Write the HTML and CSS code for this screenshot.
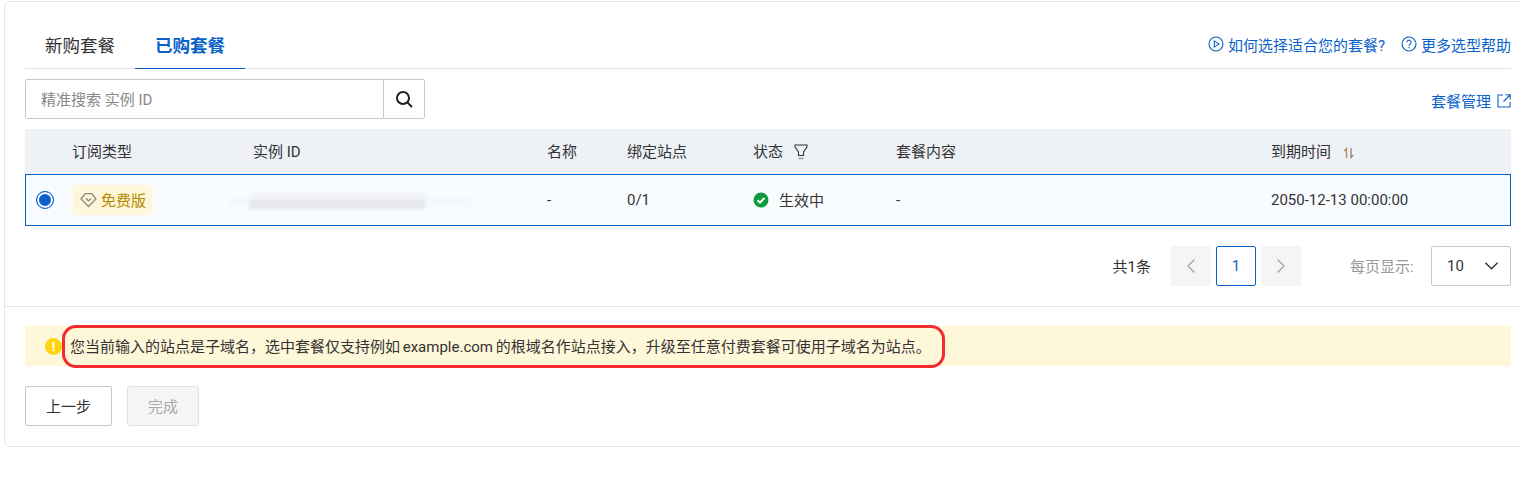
FILE: index.html
```html
<!DOCTYPE html>
<html lang="zh">
<head>
<meta charset="utf-8">
<title>已购套餐</title>
<link rel="stylesheet" href="styles.css">
</head>
<body>
<main class="card">
  <section class="top">
    <div class="tabbar">
      <div class="tabs">
        <span class="tab">新购套餐</span>
        <span class="tab active">已购套餐</span>
      </div>
      <div class="help">
        <a class="link"><svg class="ic" viewBox="0 0 16 16"><circle cx="8" cy="8" r="7"/><path d="M6.300 4.900v6.200L11 8z"/></svg>如何选择适合您的套餐?</a>
        <a class="link"><svg class="ic" viewBox="0 0 16 16"><circle cx="8" cy="8" r="7"/><path d="M5.900 6.300a2.100 2.100 0 1 1 3.300 1.700c-.8.5-1.200.9-1.200 1.800M8 11v1.200"/></svg>更多选型帮助</a>
      </div>
    </div>
    <div class="toolbar">
      <div class="search">
        <span class="placeholder">精准搜索 实例 ID</span>
        <span class="search-btn"><svg viewBox="0 0 18 18"><circle cx="8" cy="8" r="6"/><path d="M12.400 12.400 17 17"/></svg></span>
      </div>
      <a class="link manage">套餐管理<svg class="ext" viewBox="0 0 14 14"><path d="M6 1H1v12h12V8M8.500 .8h4.700v4.700M13 1 6.500 7.500"/></svg></a>
    </div>
    <div class="row head">
      <span></span>
      <span>订阅类型</span>
      <span>实例 ID</span>
      <span>名称</span>
      <span>绑定站点</span>
      <span class="with-icon">状态<svg class="filter" viewBox="0 0 14 16"><path d="M1 1h12v2L9.500 8v3.500h-5V8L1 3z"/><path class="under" d="M4.500 14.500h5"/></svg></span>
      <span>套餐内容</span>
      <span class="with-icon">到期时间<svg class="sort" viewBox="0 0 12 12"><path class="up" d="M3.500 11V1.500L1.200 4"/><path class="down" d="M8 1v9.500L10.300 8"/></svg></span>
    </div>
    <div class="row body">
      <span class="radio-cell"><span class="radio"></span></span>
      <span><span class="badge"><svg viewBox="0 0 16 16"><path class="gem" d="M5 2.500h6L15 7.500 8 14.500 1 7.500z"/><path class="gem" d="M5.500 7 8 9.300 10.500 7"/></svg>免费版</span></span>
      <span class="blur-cell"><span class="blur-wide"></span><span class="blur-core"></span></span>
      <span>-</span>
      <span>0/1</span>
      <span class="status"><svg viewBox="0 0 16 16"><circle cx="8" cy="8" r="7.500"/><path d="M4.500 8.200 7 10.500l4.500-4.500"/></svg><span class="status-text">生效中</span></span>
      <span>-</span>
      <span>2050-12-13 00:00:00</span>
    </div>
    <div class="pager">
      <span class="total">共1条</span>
      <span class="page off"><svg viewBox="0 0 10 16"><path d="M8.500 1.500 2 8l6.500 6.500"/></svg></span>
      <span class="page current">1</span>
      <span class="page off"><svg viewBox="0 0 10 16"><path d="M1.500 1.500 8 8l-6.500 6.500"/></svg></span>
      <span class="size-label">每页显示:</span>
      <span class="size"><span>10</span><svg viewBox="0 0 16 10"><path d="M1.500 1.500 8 8l6.500-6.500"/></svg></span>
    </div>
  </section>
  <section class="bottom">
    <div class="alert">
      <span class="alert-icon">!</span>
      <span class="alert-text">您当前输入的站点是子域名，选中套餐仅支持例如 example.com 的根域名作站点接入，升级至任意付费套餐可使用子域名为站点。</span>
      <span class="highlight"></span>
    </div>
    <div class="actions">
      <span class="btn">上一步</span>
      <span class="btn disabled">完成</span>
    </div>
  </section>
</main>
</body>
</html>
```

FILE: styles.css
```css
* { box-sizing: border-box; }
html, body { margin: 0; background: #fff; }
body {
  padding: 1px 0 0 4px;
  font-family: "Roboto", "Noto Sans CJK SC", sans-serif;
  font-size: 15px;
  color: #333;
  overflow: hidden;
}
.card {
  height: 446px;
  margin-right: -4px;
  border: 1px solid #e5e5e5;
  border-radius: 6px;
}
.top { padding: 23px 13px 20px 20px; border-bottom: 1px solid #e5e5e5; height: 305px; }
.tabbar {
  display: flex;
  justify-content: space-between;
  height: 44px;
  border-bottom: 1px solid #e3e3e3;
}
.tabs { display: flex; }
.tab {
  width: 110px;
  height: 44px;
  padding-left: 20px;
  font-size: 17.500px;
  line-height: 43px;
  color: #333;
}
.tab.active {
  color: #0a62c9;
  font-weight: 700;
  border-bottom: 1px solid #0a62c9;
}
.help { display: flex; gap: 16px; height: 38px; align-items: center; }
.link { display: inline-flex; align-items: center; color: #0a62c9; }
.ic { width: 16px; height: 16px; margin-right: 4px; fill: none; stroke: #0a62c9; stroke-width: 1.100; }
.toolbar { display: flex; justify-content: space-between; align-items: center; margin-top: 10px; height: 40px; }
.search {
  display: flex;
  justify-content: space-between;
  width: 400px;
  height: 40px;
  border: 1px solid #c8c8c8;
  border-radius: 2px;
  align-items: center;
  padding-left: 15px;
}
.placeholder { color: #888; margin-top: -2px; }
.search-btn {
  display: flex;
  width: 41px;
  height: 38px;
  border-left: 1px solid #c8c8c8;
  align-items: center;
  justify-content: center;
}
.search-btn svg { width: 18px; height: 18px; fill: none; stroke: #222; stroke-width: 2; }
.manage { margin-top: 3px; }
.ext { width: 14px; height: 14px; margin-left: 6px; fill: none; stroke: #0a62c9; stroke-width: 1.100; }
.row {
  display: grid;
  grid-template-columns: 47px 181px 294px 80px 126px 143px 375px 1fr;
  align-items: center;
}
.head { height: 45px; margin-top: 10px; background: #eef1f6; padding-bottom: 2px; }
.body {
  height: 52px;
  background: #f9fcff;
  border: 1px solid #0a62c9;
  grid-template-columns: 47px 180px 294px 80px 126px 143px 375px 1fr;
}
.with-icon { display: flex; align-items: center; }
.filter { width: 14px; height: 16px; margin-left: 11px; margin-top: 3px; fill: none; stroke: #333; stroke-width: 1.100; }
.filter .under { stroke: #999; stroke-width: 1.500; }
.sort { width: 12px; height: 12px; margin-left: 12px; margin-top: 4px; fill: none; stroke-width: 1.300; }
.sort .up { stroke: #b08a50; }
.sort .down { stroke: #888; }
.radio-cell { display: flex; padding-left: 10px; }
.radio {
  width: 18px;
  height: 18px;
  border: 1.500px solid #0a62c9;
  border-radius: 50%;
  background: #0a62c9;
  box-shadow: inset 0 0 0 2px #fff;
}
.badge {
  display: inline-flex;
  align-items: center;
  height: 30px;
  width: 79px;
  padding: 0 0 1px 7px;
  background: #fff7d9;
  color: #b38a00;
  border-radius: 2px;
}
.badge svg { width: 17px; height: 17px; margin-right: 4px; }
.gem { fill: none; stroke: #8c8c7c; stroke-width: 1.300; }
.blur-cell { display: block; position: relative; height: 20px; }
.blur-wide {
  position: absolute;
  left: -24px;
  top: 8px;
  width: 242px;
  height: 8px;
  background: #f3f6f9;
  filter: blur(2px);
}
.blur-core {
  position: absolute;
  left: -3px;
  top: 2px;
  width: 175px;
  height: 17px;
  background: linear-gradient(#f2f4f6 40%, #e6e8eb 40%);
  filter: blur(1.500px);
}
.status { display: flex; align-items: center; }
.status svg { width: 16px; height: 16px; margin-right: 10px; }
.status-text { margin-top: -2px; }
.status circle { fill: #0e9a3e; }
.status path { fill: none; stroke: #fff; stroke-width: 2; }
.pager { display: flex; align-items: center; justify-content: flex-end; margin-top: 20px; height: 40px; }
.total { margin-right: 20px; margin-top: -2px; }
.page {
  display: flex;
  width: 40px;
  height: 40px;
  margin-right: 5px;
  align-items: center;
  justify-content: center;
  border-radius: 2px;
}
.page svg { width: 10px; height: 16px; fill: none; stroke: #aaa; stroke-width: 1.500; }
.off { background: #f5f5f5; }
.current { border: 1px solid #0a62c9; color: #0a62c9; }
.size-label { width: 67px; margin-left: 44px; margin-right: 14px; margin-top: -2px; color: #999; }
.size {
  display: flex;
  width: 80px;
  height: 40px;
  padding: 0 11px 0 15px;
  border: 1px solid #c8c8c8;
  border-radius: 2px;
  align-items: center;
  justify-content: space-between;
}
.size svg { width: 15px; height: 10px; fill: none; stroke: #333; stroke-width: 1.500; }
.bottom { padding: 19px 10px 0 20px; }
.alert {
  position: relative;
  display: flex;
  align-items: center;
  width: 1486px;
  height: 40px;
  padding-left: 20px;
  background: #fff7d9;
}
.alert-icon {
  display: flex;
  width: 17px;
  height: 17px;
  margin-right: 8px;
  flex: none;
  align-items: center;
  justify-content: center;
  border-radius: 50%;
  background: #ffd30f;
  color: #fff;
  font-size: 13px;
  font-weight: 700;
}
.alert-text { word-spacing: -1px; margin-top: -2px; }
.highlight {
  position: absolute;
  left: 37px;
  top: -1px;
  width: 883px;
  height: 43px;
  border: 3px solid #f22c2c;
  border-radius: 14px;
}
.actions { display: flex; gap: 15px; margin-top: 20px; }
.btn {
  display: flex;
  width: 87px;
  height: 40px;
  padding-bottom: 2px;
  border: 1px solid #c8c8c8;
  border-radius: 2px;
  align-items: center;
  justify-content: center;
}
.btn.disabled {
  width: 72px;
  background: #f5f5f5;
  border-color: #e3e3e3;
  color: #aaa;
}
```
